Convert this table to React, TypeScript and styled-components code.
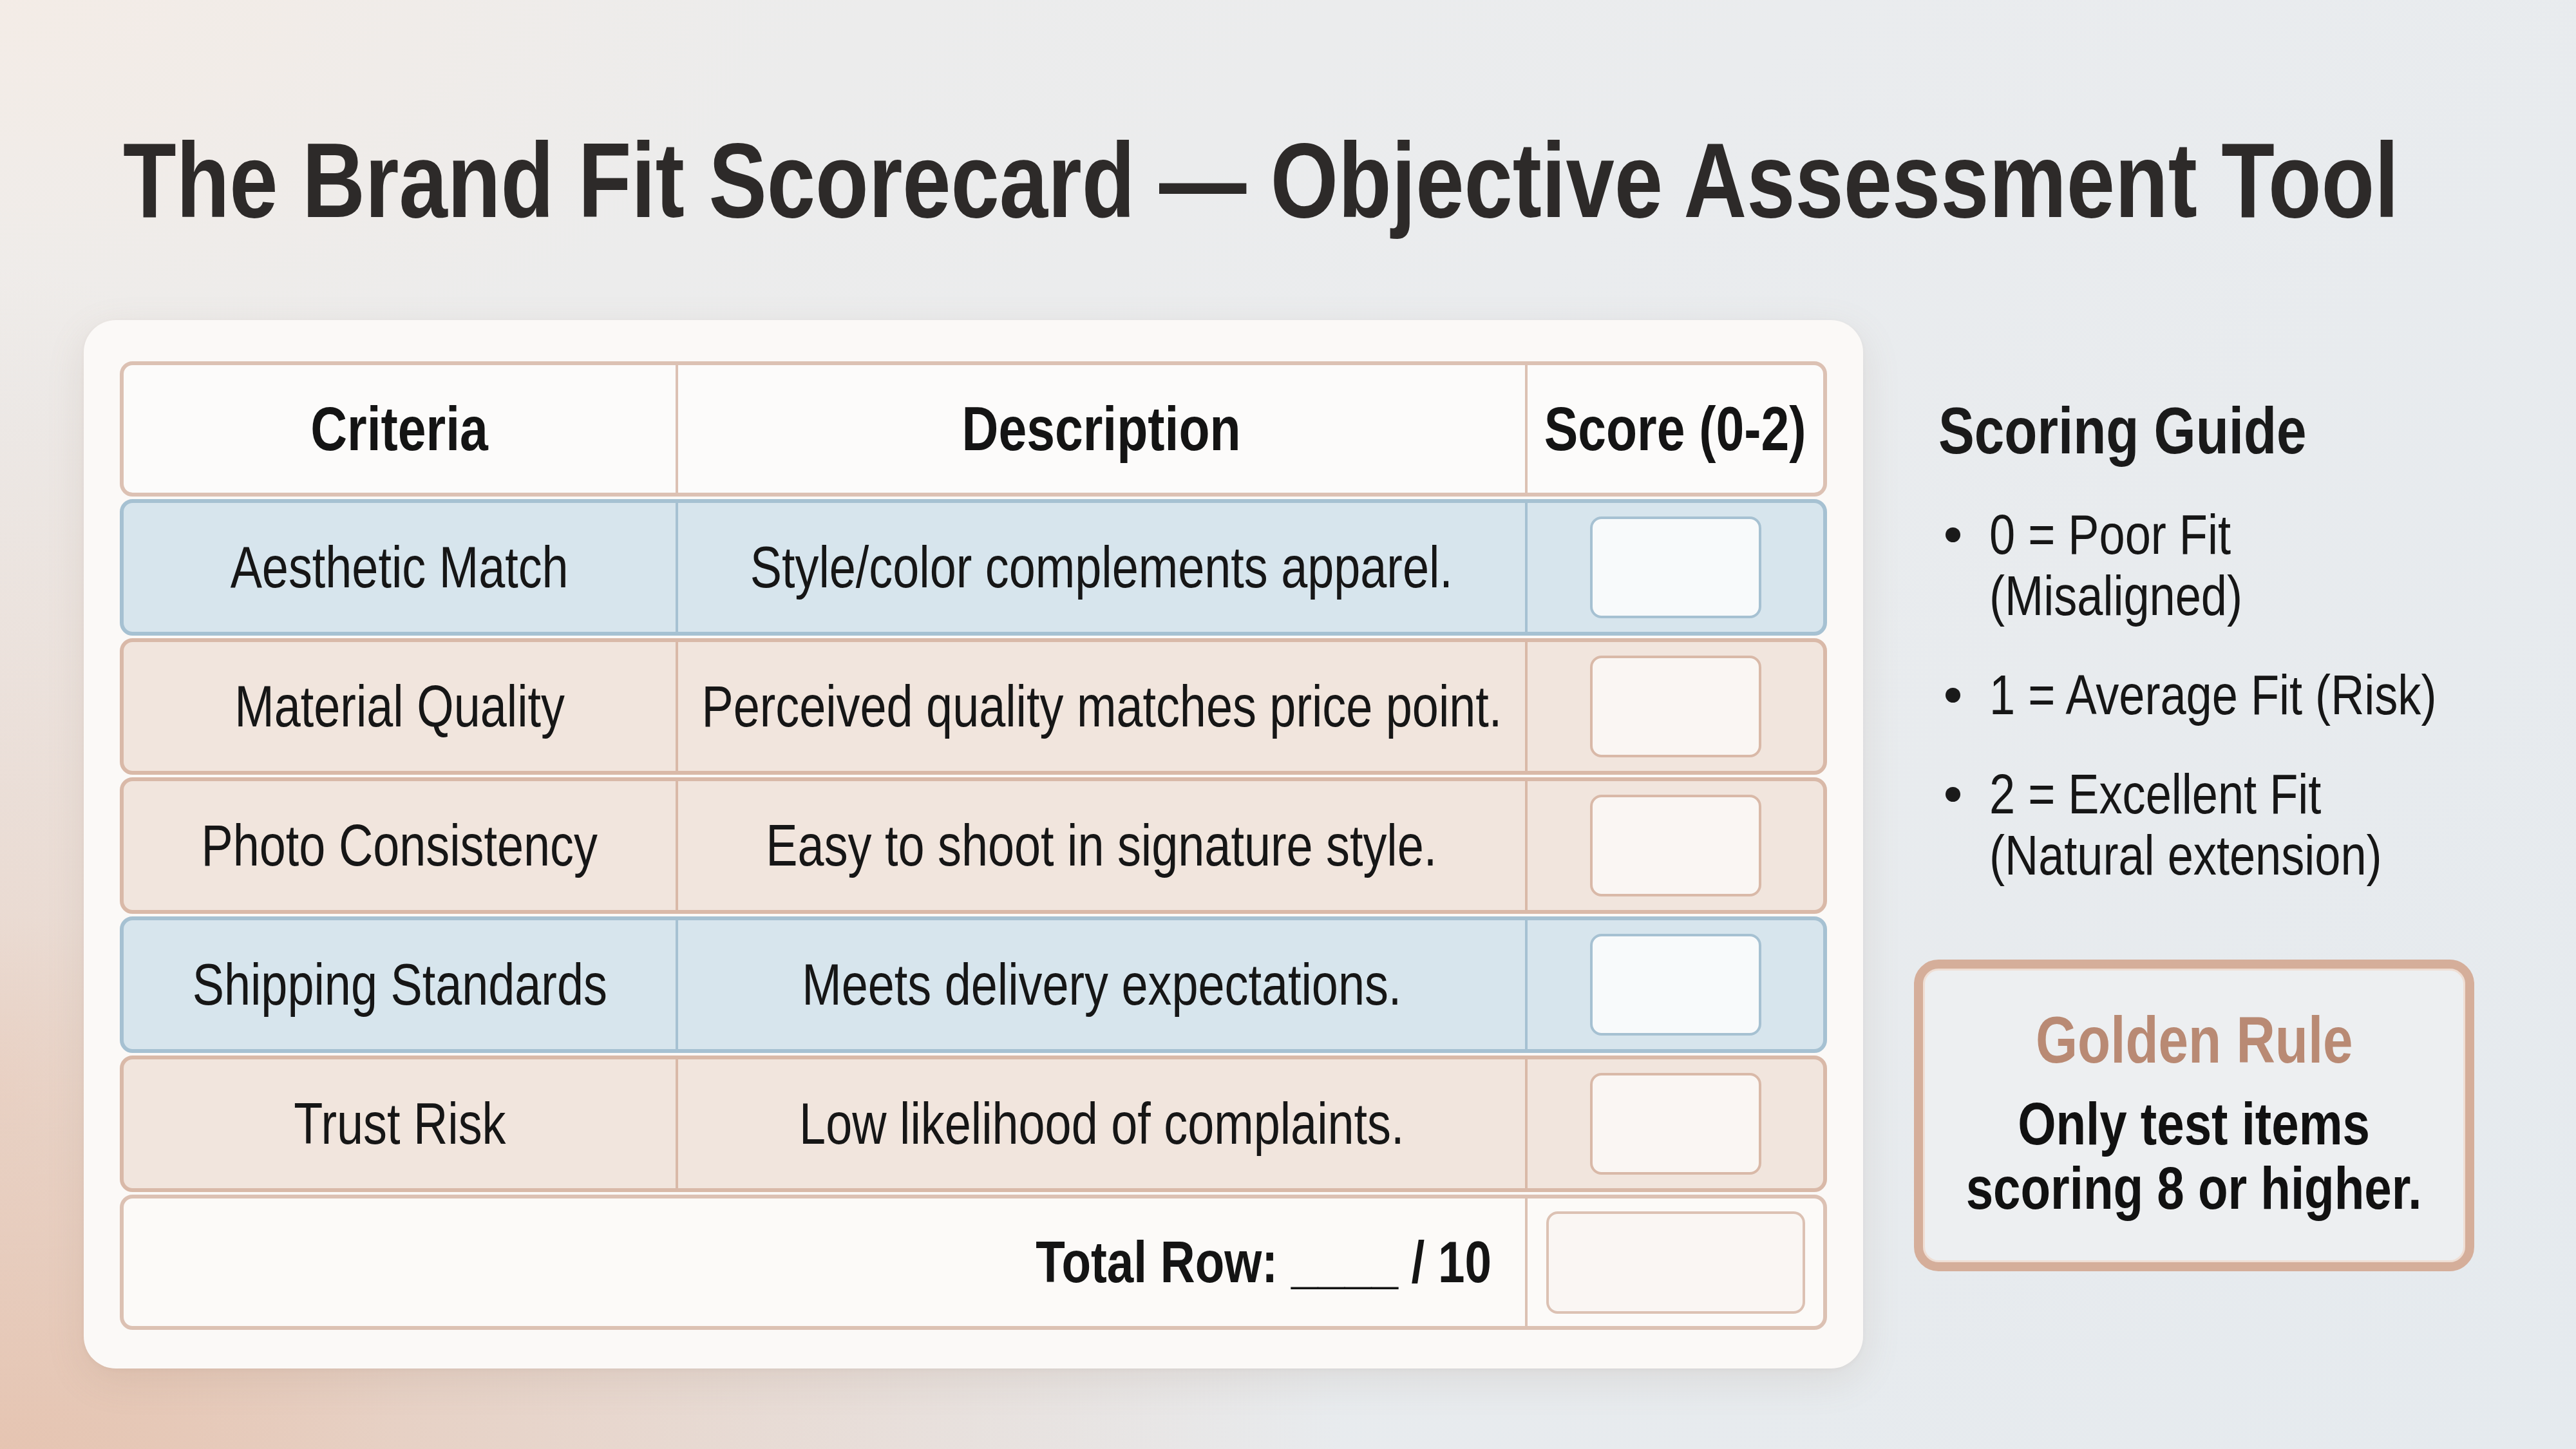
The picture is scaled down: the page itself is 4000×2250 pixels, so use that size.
import React from "react";
import styled, { createGlobalStyle } from "styled-components";

const GlobalStyle = createGlobalStyle`
  html, body { margin: 0; padding: 0; }
  body {
    font-family: "Liberation Sans", Arial, sans-serif;
    color: #161616;
  }
`;

const Page = styled.div`
  width: 4000px;
  height: 2250px;
  box-sizing: border-box;
  padding: 198px 0 0 130px;
  display: flex;
  flex-direction: column;
  background:
    radial-gradient(ellipse 2900px 1150px at 0% 100%, rgba(229, 194, 174, 0.92), rgba(229, 194, 174, 0) 72%),
    radial-gradient(ellipse 900px 1700px at 0% 75%, rgba(232, 200, 182, 0.6), rgba(232, 200, 182, 0) 75%),
    radial-gradient(ellipse 1600px 800px at 0% 0%, rgba(244, 236, 230, 0.9), rgba(244, 236, 230, 0) 75%),
    linear-gradient(135deg, #eeecea 0%, #eaecee 45%, #e5eaee 100%);
  overflow: hidden;
`;

/* The reference face is a condensed geometric sans: squeeze Liberation Sans to its width. */
const Squeeze = styled.span<{ $origin?: string }>`
  display: inline-block;
  white-space: nowrap;
  transform: scaleX(0.82);
  transform-origin: ${(p) => p.$origin ?? "center center"};
`;

const Title = styled.h1`
  margin: 0 0 0 61px;
  font-size: 165px;
  line-height: 1;
  font-weight: 700;
  color: #2d2a29;
  white-space: nowrap;
`;

const Main = styled.div`
  display: flex;
  align-items: flex-start;
  gap: 79px;
  margin-top: 134px;
`;

const Card = styled.div`
  width: 2763px;
  height: 1628px;
  box-sizing: border-box;
  padding: 64px 56px 0 56px;
  background: #fbf9f7;
  border-radius: 50px;
  box-shadow: 0 18px 60px rgba(140, 110, 90, 0.14), 0 2px 6px rgba(140, 110, 90, 0.06);
`;

const Table = styled.div`
  display: flex;
  flex-direction: column;
  gap: 4px;
`;

type Tone = "head" | "warm" | "cool" | "total";

const toneBg: Record<Tone, string> = {
  head: "#fcfbfa",
  warm: "#f1e5dd",
  cool: "#d7e5ed",
  total: "#fcfaf8",
};
const toneLine: Record<Tone, string> = {
  head: "#dcc1b3",
  warm: "#d9b9a8",
  cool: "#a6c1d2",
  total: "#dcc1b3",
};

const Row = styled.div<{ $tone: Tone; $h: number }>`
  display: grid;
  grid-template-columns: 857px 1319px 1fr;
  height: ${(p) => p.$h}px;
  box-sizing: border-box;
  border: 6px solid ${(p) => toneLine[p.$tone]};
  border-radius: 20px;
  background: ${(p) => toneBg[p.$tone]};
`;

const TotalRowBox = styled(Row)`
  grid-template-columns: 2176px 1fr;
`;

const Cell = styled.div<{ $tone: Tone; $divider?: boolean }>`
  display: flex;
  align-items: center;
  justify-content: center;
  min-width: 0;
  white-space: nowrap;
  font-size: 90px;
  font-weight: 400;
  color: #161616;
  border-left: ${(p) => (p.$divider ? `4px solid ${toneLine[p.$tone]}` : "none")};
`;

const HeadCell = styled(Cell)`
  font-size: 96px;
  font-weight: 700;
  color: #141414;
`;

const TotalLabel = styled.div`
  display: flex;
  align-items: center;
  justify-content: flex-end;
  padding-right: 52px;
  font-size: 91px;
  font-weight: 700;
  color: #141414;
  white-space: nowrap;
`;

const ScoreBox = styled.div<{ $tone: Tone; $wide?: boolean }>`
  flex: none;
  width: ${(p) => (p.$wide ? 402 : 266)}px;
  height: ${(p) => (p.$wide ? 159 : 158)}px;
  box-sizing: border-box;
  border: 4px solid ${(p) => toneLine[p.$tone]};
  border-radius: 18px;
  background: ${(p) => (p.$tone === "cool" ? "#f8fafb" : "#faf6f3")};
`;

const Side = styled.div`
  width: 870px;
  display: flex;
  flex-direction: column;
`;

const GuideTitle = styled.h2`
  margin: 121px 0 0 38px;
  font-size: 102px;
  line-height: 1;
  font-weight: 700;
  color: #1a1a1a;
  white-space: nowrap;
`;

const GuideList = styled.ul`
  list-style: none;
  margin: 62px 0 0 0;
  padding: 0;
  display: flex;
  flex-direction: column;
  gap: 59px;
`;

const GuideItem = styled.li`
  display: flex;
  align-items: flex-start;
  font-size: 88px;
  line-height: 95px;
  color: #161616;
`;

const Dot = styled.span`
  flex: none;
  width: 23px;
  height: 23px;
  border-radius: 50%;
  background: #1a1a1a;
  margin: 37px 45px 0 49px;
`;

const RuleBox = styled.div`
  margin-top: 115px;
  height: 484px;
  box-sizing: border-box;
  border: 14px solid #d5ae9a;
  border-radius: 38px;
  box-shadow: inset 0 0 0 3px rgba(240, 215, 200, 0.7);
  background: #edeff1;
  display: flex;
  flex-direction: column;
  align-items: center;
  justify-content: center;
  padding-bottom: 10px;
`;

const RuleTitle = styled.div`
  font-size: 102px;
  line-height: 110px;
  font-weight: 700;
  color: #b98a74;
  margin-bottom: 25px;
  white-space: nowrap;
`;

const RuleText = styled.div`
  font-size: 93px;
  line-height: 100px;
  font-weight: 700;
  color: #111;
  text-align: center;
  white-space: nowrap;
`;

const rows: { tone: Tone; criteria: string; desc: string }[] = [
  { tone: "cool", criteria: "Aesthetic Match", desc: "Style/color complements apparel." },
  { tone: "warm", criteria: "Material Quality", desc: "Perceived quality matches price point." },
  { tone: "warm", criteria: "Photo Consistency", desc: "Easy to shoot in signature style." },
  { tone: "cool", criteria: "Shipping Standards", desc: "Meets delivery expectations." },
  { tone: "warm", criteria: "Trust Risk", desc: "Low likelihood of complaints." },
];

export default function App() {
  return (
    <>
      <GlobalStyle />
      <Page>
        <Title>
          <Squeeze $origin="left center">The Brand Fit Scorecard — Objective Assessment Tool</Squeeze>
        </Title>
        <Main>
          <Card>
            <Table>
              <Row $tone="head" $h={210}>
                <HeadCell $tone="head">
                  <Squeeze>Criteria</Squeeze>
                </HeadCell>
                <HeadCell $tone="head" $divider>
                  <Squeeze>Description</Squeeze>
                </HeadCell>
                <HeadCell $tone="head" $divider>
                  <Squeeze>Score (0-2)</Squeeze>
                </HeadCell>
              </Row>
              {rows.map((r) => (
                <Row key={r.criteria} $tone={r.tone} $h={212}>
                  <Cell $tone={r.tone}>
                    <Squeeze>{r.criteria}</Squeeze>
                  </Cell>
                  <Cell $tone={r.tone} $divider>
                    <Squeeze>{r.desc}</Squeeze>
                  </Cell>
                  <Cell $tone={r.tone} $divider>
                    <ScoreBox $tone={r.tone} />
                  </Cell>
                </Row>
              ))}
              <TotalRowBox $tone="total" $h={210}>
                <TotalLabel>
                  <Squeeze $origin="right center">Total Row: ____ / 10</Squeeze>
                </TotalLabel>
                <Cell $tone="total" $divider>
                  <ScoreBox $tone="total" $wide />
                </Cell>
              </TotalRowBox>
            </Table>
          </Card>
          <Side>
            <GuideTitle>
              <Squeeze $origin="left center">Scoring Guide</Squeeze>
            </GuideTitle>
            <GuideList>
              <GuideItem>
                <Dot />
                <Squeeze $origin="left center">
                  0 = Poor Fit
                  <br />
                  (Misaligned)
                </Squeeze>
              </GuideItem>
              <GuideItem>
                <Dot />
                <Squeeze $origin="left center">1 = Average Fit (Risk)</Squeeze>
              </GuideItem>
              <GuideItem>
                <Dot />
                <Squeeze $origin="left center">
                  2 = Excellent Fit
                  <br />
                  (Natural extension)
                </Squeeze>
              </GuideItem>
            </GuideList>
            <RuleBox>
              <RuleTitle>
                <Squeeze>Golden Rule</Squeeze>
              </RuleTitle>
              <RuleText>
                <Squeeze>
                  Only test items
                  <br />
                  scoring 8 or higher.
                </Squeeze>
              </RuleText>
            </RuleBox>
          </Side>
        </Main>
      </Page>
    </>
  );
}
